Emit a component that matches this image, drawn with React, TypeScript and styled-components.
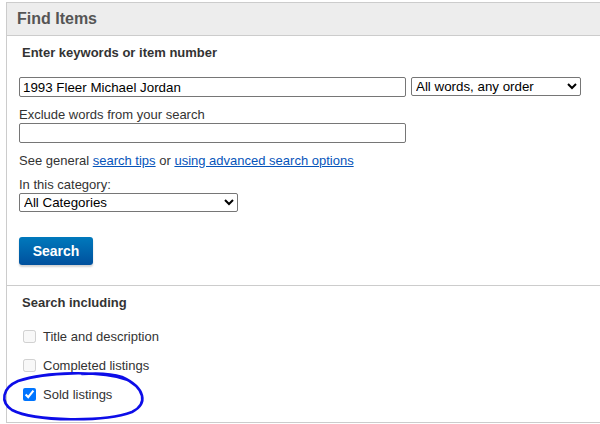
import React from "react";
import styled, { createGlobalStyle } from "styled-components";

const Global = createGlobalStyle`
  html, body { margin: 0; padding: 0; background: #fff; }
  body { font-family: "Liberation Sans", Arial, sans-serif; color: #333; font-size: 13px; overflow: hidden; }
`;

const Page = styled.div`
  position: relative;
  width: 600px;
  height: 424px;
  overflow: hidden;
  padding: 2px 0 0 6px;
  box-sizing: border-box;
`;

const Panel = styled.div`
  border-left: 1px solid #ccc;
  border-top: 1px solid #ccc;
  width: 620px;
`;

const Header = styled.div`
  height: 32px;
  background: #ededed;
  border-bottom: 1px solid #ccc;
  display: flex;
  align-items: center;
  padding-left: 10px;
  font-size: 16px;
  font-weight: bold;
  color: #555;
`;

const Section = styled.div<{ $pb: number }>`
  padding: 9px 0 ${(p) => p.$pb}px 12px;
  border-bottom: 1px solid #ccc;
  display: flex;
  flex-direction: column;
  align-items: flex-start;
`;

const Title = styled.div`
  font-weight: bold;
  font-size: 13px;
  line-height: 16px;
  padding-left: 3px;
`;

const Label = styled.div<{ $mt: number }>`
  margin-top: ${(p) => p.$mt}px;
  line-height: 16px;
  font-size: 13px;
`;

const Row = styled.div`
  display: flex;
  gap: 5px;
  align-items: flex-start;
  margin-top: 16px;
`;

const TextInput = styled.input`
  box-sizing: border-box;
  width: 387px;
  height: 20px;
  border: 1px solid #767676;
  border-radius: 2px;
  padding: 0 3px;
  font-family: "Liberation Sans", Arial, sans-serif;
  font-size: 13.33px;
  color: #000;
  outline: none;
`;

const Select = styled.select<{ $w: number }>`
  box-sizing: border-box;
  width: ${(p) => p.$w}px;
  height: 19px;
  border: 1px solid #767676;
  border-radius: 2px;
  font-family: "Liberation Sans", Arial, sans-serif;
  font-size: 13.33px;
  color: #000;
  background: #fff;
`;

const Link = styled.a`
  color: #0654ba;
  text-decoration: underline;
`;

const Button = styled.button`
  margin-top: 25px;
  width: 74px;
  height: 28px;
  border: none;
  border-radius: 3px;
  background: linear-gradient(#0079bc, #00509d);
  color: #fff;
  font-family: "Liberation Sans", Arial, sans-serif;
  font-weight: bold;
  font-size: 14px;
  box-shadow: 0 2px 2px rgba(0, 0, 0, 0.18);
  cursor: pointer;
`;

const IncludeTitle = styled(Title)`
  margin-bottom: 11px;
`;

const CheckRow = styled.label`
  display: flex;
  align-items: center;
  height: 29px;
  font-size: 13px;
  color: #333;
`;

const Check = styled.input`
  width: 13px;
  height: 13px;
  margin: 0 7px 0 4px;
`;

const Annotation = styled.svg`
  position: absolute;
  left: 0;
  top: 366px;
  pointer-events: none;
`;

export default function App() {
  return (
    <>
      <Global />
      <Page>
        <Panel>
          <Header>Find Items</Header>
          <Section $pb={20}>
            <Title>Enter keywords or item number</Title>
            <Row>
              <TextInput defaultValue="1993 Fleer Michael Jordan" />
              <Select $w={170} defaultValue="all">
                <option value="all">All words, any order</option>
              </Select>
            </Row>
            <Label $mt={10}>Exclude words from your search</Label>
            <TextInput />
            <Label $mt={10}>
              See general <Link href="#">search tips</Link> or{" "}
              <Link href="#">using advanced search options</Link>
            </Label>
            <Label $mt={8}>In this category:</Label>
            <Select $w={219} defaultValue="all">
              <option value="all">All Categories</option>
            </Select>
            <Button>Search</Button>
          </Section>
          <Section $pb={13}>
            <IncludeTitle>Search including</IncludeTitle>
            <CheckRow>
              <Check type="checkbox" disabled />
              Title and description
            </CheckRow>
            <CheckRow>
              <Check type="checkbox" disabled />
              Completed listings
            </CheckRow>
            <CheckRow>
              <Check type="checkbox" defaultChecked />
              Sold listings
            </CheckRow>
          </Section>
        </Panel>
        <Annotation width="150" height="58" viewBox="0 0 150 58">
          <path
            d="M 128 14 C 100 4, 45 6, 18 15 C 2 22, 0 36, 12 44 C 35 56, 105 56, 132 46 C 148 38, 146 22, 122 11 C 110 7, 95 7, 82 8"
            fill="none"
            stroke="#0d0de8"
            strokeWidth="2.6"
            strokeLinecap="round"
          />
        </Annotation>
      </Page>
    </>
  );
}
